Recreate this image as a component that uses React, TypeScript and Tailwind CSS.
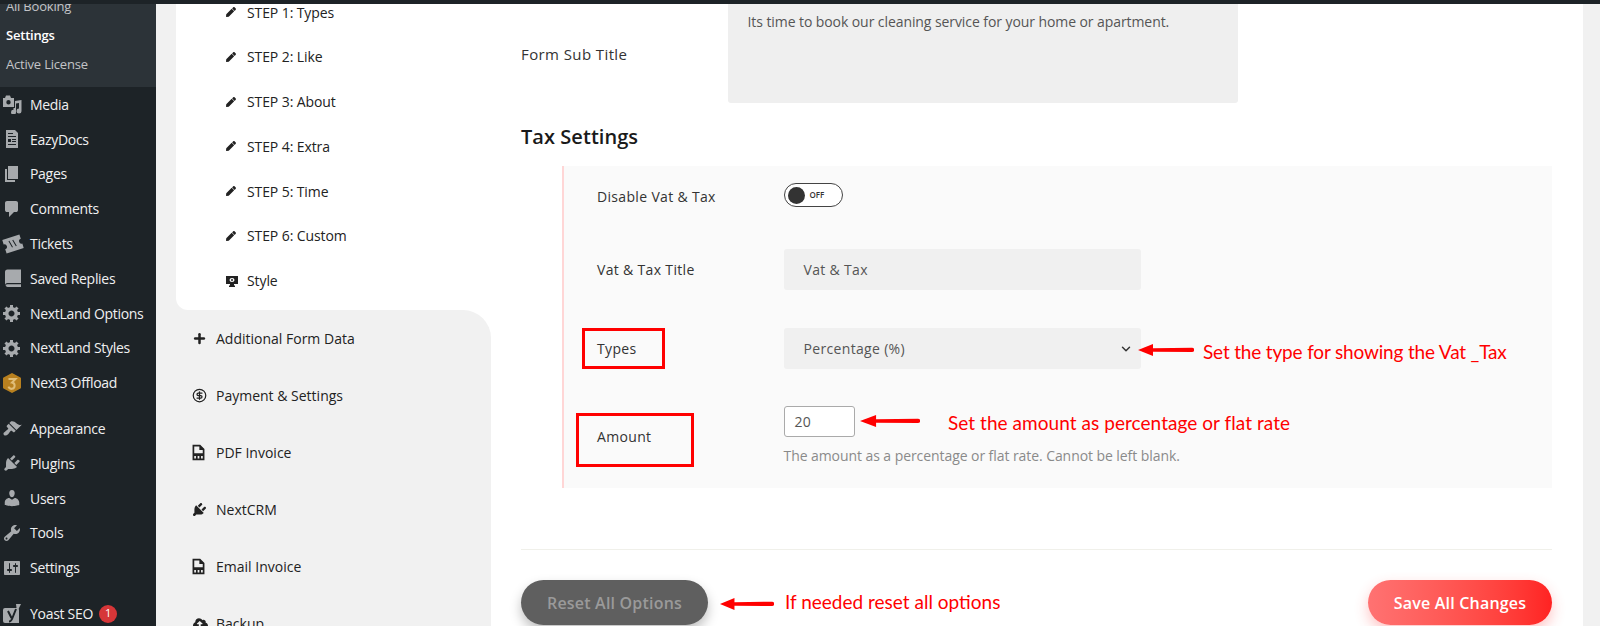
import { ChevronDown, CircleDollarSign, Plus } from 'lucide-react';
import { FaCloudUploadAlt, FaPen } from 'react-icons/fa';
import type { ReactNode } from 'react';

function Dash({ d, className = 'w-5 h-5' }: { d: string; className?: string }) {
  return (
    <svg viewBox="0 0 20 20" fill="currentColor" fillRule="evenodd" className={className}>
      <path d={d} />
    </svg>
  );
}

const gear =
  'M18 12h-2.18c-.17.7-.44 1.35-.81 1.93l1.54 1.54-2.1 2.1-1.54-1.54c-.58.36-1.23.63-1.91.79V19H8v-2.18c-.68-.16-1.33-.43-1.91-.79l-1.54 1.54-2.12-2.12 1.54-1.54c-.36-.58-.63-1.23-.79-1.91H1V9.03h2.17c.16-.7.44-1.35.8-1.94L2.43 5.55l2.1-2.1 1.54 1.54c.58-.37 1.24-.64 1.93-.81V2h3v2.18c.68.16 1.33.43 1.91.79l1.54-1.54 2.12 2.12-1.54 1.54c.36.59.64 1.24.8 1.94H18V12zm-8.5 1.5c1.66 0 3-1.34 3-3s-1.34-3-3-3-3 1.34-3 3 1.34 3 3 3z';
const plug =
  'M13.11 4.36L9.87 7.6 8 5.73l3.24-3.24c.35-.34 1.05-.2 1.56.32.52.51.66 1.21.31 1.55zm-8 1.77l.91-1.12 9.01 9.01-1.19.84c-.71.71-2.63 1.16-3.82 1.16H6.14L4.9 17.26c-.59.59-1.54.59-2.12 0-.59-.58-.59-1.53 0-2.12l1.24-1.24v-3.88c0-1.13.4-3.19 1.09-3.89zm7.26 3.97l3.24-3.24c.34-.35 1.04-.21 1.55.31.52.51.66 1.21.31 1.55l-3.24 3.25z';
const fileBars =
  'M3 1h9l5 5v13H3zM11 3H5v8h10V7h-4zM5 14v3h2v-3zm4 0v3h2v-3zm4 0v3h2v-3z';

function MediaIcon() {
  return (
    <svg viewBox="0 0 20 20" fill="currentColor" fillRule="evenodd" className="w-5 h-5">
      <path d="M1 4h2l1-2.500h4L9 4h3v9H1zM6.500 6a2.200 2.200 0 1 0 0 4.400 2.200 2.200 0 0 0 0-4.400z" />
      <path d="M19.500 6v11a2.500 2.500 0 1 1-2.500-2.400V9l-3 .6V18a2.500 2.500 0 1 1-2.500-2.300V14H13V7z" />
    </svg>
  );
}

function DocIcon() {
  return (
    <svg viewBox="0 0 20 20" className="w-5 h-5">
      <path fill="currentColor" d="M4 1h9l3 3v15H4z" />
      <path fill="#1d2327" d="M6 4h5v1H6zM6 7h8v1H6zM6 10h3v3H6zM10 10h4v1h-4zM10 12h4v1h-4zM6 15h8v1H6z" />
    </svg>
  );
}

function TicketIcon() {
  return (
    <svg viewBox="0 0 22 20" className="w-[22px] h-5">
      <g transform="rotate(-18 11 10)">
        <path fill="currentColor" d="M2 3h18v4.500a2.500 2.500 0 0 0 0 5V17H2v-4.500a2.500 2.500 0 0 0 0-5z" />
        <path stroke="#1d2327" strokeWidth="1" d="M8 6l1.500 7M12 6l1.500 7" />
      </g>
    </svg>
  );
}

function BookIcon() {
  return (
    <svg viewBox="0 0 20 20" fill="currentColor" className="w-5 h-5">
      <path d="M3 4a2.500 2.500 0 0 1 2.500-2.500H19v13.500H5.500A2.500 2.500 0 0 0 3 17z" />
      <path d="M5.500 16.200H19V19H5.500A2 2 0 0 1 3.600 17.600a2 2 0 0 1 1.900-1.400z" />
    </svg>
  );
}

function HexIcon() {
  return (
    <svg viewBox="0 0 20 22" className="w-5 h-[22px]">
      <path fill="#b8801f" d="M10 1l8.500 4.500a1 1 0 0 1 .5 1v9a1 1 0 0 1-.5 1L10 21l-8.500-4.500a1 1 0 0 1-.5-1v-9a1 1 0 0 1 .5-1z" />
      <path fill="none" stroke="#e0bd78" strokeWidth="2" d="M6.500 7h7l-3.500 3.500a3.200 3.200 0 1 1-3.600 4.200" />
    </svg>
  );
}

function YoastIcon() {
  return (
    <svg viewBox="0 0 20 20" className="w-5 h-5">
      <path fill="currentColor" d="M3 4h12a2 2 0 0 1 2 2v13H3a2 2 0 0 1-2-2V6a2 2 0 0 1 2-2z" />
      <path fill="currentColor" d="M14 0h5l-4 8z" />
      <path fill="none" stroke="#1d2327" strokeWidth="2" d="M6 7l3.500 7M14 5l-4 10q-1 2.500-3 2.500" />
    </svg>
  );
}

function StyleIcon() {
  return (
    <svg viewBox="0 0 12 12" className="w-3 h-3">
      <path fill="#222" fillRule="evenodd" d="M0 1h12v8H8v1.500h1V12H3v-1.500h1V9H0zM6 3a2.500 2 0 1 0 0 4 2.500 2 0 0 0 0-4z" />
      <circle cx="6" cy="5" r="1" fill="#222" />
    </svg>
  );
}

function Arrow({ className }: { className: string }) {
  return (
    <svg viewBox="0 0 56 14" fill="#ff0000" className={className} preserveAspectRatio="none">
      <path d="M0 7L15 1v4.200L54 4.700a2 2 0 0 1 0 4.400L15 8.800V13z" />
    </svg>
  );
}

const topMenu: [string, ReactNode][] = [
  ['Media', <MediaIcon />],
  ['EazyDocs', <DocIcon />],
  ['Pages', <Dash d="M6 15V2h10v13H6zm-1 1h8v2H3V5h2v11z" />],
  ['Comments', <Dash d="M5 2h9q.82 0 1.410.59T16 4v7q0 .82-.59 1.410T14 13h-2l-5 5v-5H5q-.82 0-1.410-.59T3 11V4q0-.82.59-1.410T5 2z" />],
  ['Tickets', <TicketIcon />],
  ['Saved Replies', <BookIcon />],
  ['NextLand Options', <Dash d={gear} />],
  ['NextLand Styles', <Dash d={gear} />],
  ['Next3 Offload', <HexIcon />],
];

const lowerMenu: [string, ReactNode][] = [
  ['Appearance', <Dash d="M14.48 11.06L7.41 3.99l1.5-1.5c.5-.56 2.3-.47 3.51.32 1.21.8 1.43 1.28 2.91 2.1 1.18.64 2.45 1.26 4.45.85zm-.71.71L6.7 4.7 4.93 6.47c-.39.39-.39 1.02 0 1.41l1.06 1.06c.39.39.39 1.03 0 1.42-.6.6-1.43 1.11-2.21 1.69-.35.26-.7.53-1.01.84C1.43 13.23 1 15 1.99 16s2.75.56 4.09-.78c.31-.31.58-.65.84-1 .58-.78 1.09-1.61 1.69-2.21.39-.39 1.03-.39 1.42 0l1.06 1.06c.39.39 1.02.39 1.41 0z" />],
  ['Plugins', <Dash d={plug} />],
  ['Users', <Dash d="M10 9.25c-2.27 0-2.73-3.44-2.73-3.44C7 4.02 7.82 2 9.97 2c2.16 0 2.98 2.02 2.71 3.81 0 0-.41 3.44-2.68 3.44zm0 2.57L12.72 10c2.39 0 4.52 2.33 4.52 4.53v2.49s-3.65 1.13-7.24 1.13c-3.65 0-7.24-1.13-7.24-1.13v-2.49c0-2.25 1.94-4.48 4.47-4.48z" />],
  ['Tools', <Dash d="M16.68 9.77c-1.34 1.34-3.3 1.67-4.95.99l-5.41 6.52c-.99.99-2.59.99-3.58 0s-.99-2.59 0-3.57l6.52-5.42c-.68-1.65-.35-3.61.99-4.95 1.28-1.28 3.12-1.62 4.72-1.06l-2.89 2.89 2.82 2.82 2.86-2.87c.53 1.58.18 3.39-1.08 4.65zM3.81 16.21c.4.39 1.04.39 1.43 0 .4-.4.4-1.04 0-1.43-.39-.4-1.03-.4-1.43 0-.39.39-.39 1.03 0 1.43z" />],
  ['Settings', <Dash d="M18 16V4c0-.55-.45-1-1-1H3c-.55 0-1 .45-1 1v12c0 .55.45 1 1 1h14c.55 0 1-.45 1-1zM8 11h1c.55 0 1 .45 1 1s-.45 1-1 1H8v1.500c0 .28-.22.5-.5.5s-.5-.22-.5-.5V13H6c-.55 0-1-.45-1-1s.45-1 1-1h1V5.500c0-.28.22-.5.5-.5s.5.22.5.5V11zm5-2h-1c-.55 0-1-.45-1-1s.45-1 1-1h1V5.500c0-.28.22-.5.5-.5s.5.22.5.5V7h1c.55 0 1 .45 1 1s-.45 1-1 1h-1v5.500c0 .28-.22.5-.5.5s-.5-.22-.5-.5V9z" />],
];

function MenuRow({ label, icon }: { label: string; icon: ReactNode }) {
  return (
    <div className="h-[34.8px] flex items-center text-[14px] tracking-[-0.3px] text-[#f0f0f1] whitespace-nowrap">
      <span className="w-[30px] pl-[2px] shrink-0 text-[#a7aaad]">{icon}</span>
      {label}
    </div>
  );
}

function Sidebar() {
  return (
    <aside className="w-[156px] shrink-0 bg-[#1d2327] overflow-hidden">
      <div className="h-[83px] bg-[#2c3338] pl-[6px] text-[13px] tracking-[-0.2px] overflow-hidden">
        <div className="h-[29px] -mt-[11.5px] flex items-center text-[#c3c4c7]">All Booking</div>
        <div className="h-[29px] flex items-center font-semibold text-white">Settings</div>
        <div className="h-[29px] flex items-center text-[#c3c4c7]">Active License</div>
      </div>
      {topMenu.map(([label, icon]) => (
        <MenuRow key={label} label={label} icon={icon} />
      ))}
      <div className="h-[11px]" />
      {lowerMenu.map(([label, icon]) => (
        <MenuRow key={label} label={label} icon={icon} />
      ))}
      <div className="h-[11px]" />
      <div className="h-[34.8px] flex items-center text-[14px] tracking-[-0.3px] text-[#f0f0f1]">
        <span className="w-[30px] pl-[2px] shrink-0 text-[#a7aaad]">
          <YoastIcon />
        </span>
        Yoast SEO
        <span className="ml-[6px] w-[18px] h-[18px] rounded-full bg-[#d63638] text-white text-[11px] flex items-center justify-center">
          1
        </span>
      </div>
    </aside>
  );
}

const steps = ['STEP 1: Types', 'STEP 2: Like', 'STEP 3: About', 'STEP 4: Extra', 'STEP 5: Time', 'STEP 6: Custom'];

const sections: [string, ReactNode][] = [
  ['Additional Form Data', <Plus className="w-[15px] h-[15px] -ml-[1px]" strokeWidth={4} />],
  ['Payment & Settings', <CircleDollarSign className="w-[15px] h-[15px] -ml-[1px]" strokeWidth={2} />],
  ['PDF Invoice', <Dash d={fileBars} className="w-[17px] h-[17px] -ml-[3px]" />],
  ['NextCRM', <Dash d={plug} className="w-[17px] h-[17px] -ml-[2px]" />],
  ['Email Invoice', <Dash d={fileBars} className="w-[17px] h-[17px] -ml-[3px]" />],
  ['Backup', <FaCloudUploadAlt className="w-[15px] h-[15px]" />],
];

function SettingsNav() {
  return (
    <div className="w-[335px] shrink-0 flex flex-col text-[14px] text-[#222]">
      <div className="h-[306px] shrink-0 pl-5 bg-[#f1f1f1]">
        <div className="h-full bg-white rounded-bl-[12px] pl-[50px] overflow-hidden">
          <div className="-mt-[14.4px] tracking-[-0.1px]">
            {steps.map((step) => (
              <div key={step} className="h-[44.8px] flex items-center whitespace-nowrap">
                <FaPen className="w-[10px] h-[10px] mr-[11px]" />
                {step}
              </div>
            ))}
            <div className="h-[44.8px] flex items-center">
              <span className="w-[21px]">
                <StyleIcon />
              </span>
              Style
            </div>
          </div>
        </div>
      </div>
      <div className="flex-1 bg-white">
        <div className="h-full bg-[#f1f1f1] rounded-tr-[28px] pl-[37px] overflow-hidden">
          {sections.map(([label, icon]) => (
            <div key={label} className="h-[57px] flex items-center whitespace-nowrap">
              <span className="w-[23px] shrink-0 flex">{icon}</span>
              {label}
            </div>
          ))}
        </div>
      </div>
    </div>
  );
}

function TaxPanel() {
  return (
    <div className="ml-[41px] mt-[15px] h-[322px] border-l-2 border-[#ffd6d6] bg-[#fafafa] pl-[33px] pt-[17px] text-[14px] tracking-[0.33px] text-[#333]">
      <div className="flex items-start h-[24px]">
        <label className="w-[186.5px] shrink-0 pt-1 leading-[20px]">Disable Vat &amp; Tax</label>
        <div className="w-[59px] h-[24px] rounded-full border border-[#444] bg-white flex items-center pl-[3px] gap-[5px]">
          <span className="w-[17px] h-[17px] rounded-full bg-[#333]" />
          <span className="text-[8px] font-semibold tracking-normal">OFF</span>
        </div>
      </div>
      <div className="flex items-center mt-[42px]">
        <label className="w-[186.5px] shrink-0">Vat &amp; Tax Title</label>
        <div className="w-[357px] h-[41px] rounded-[3px] bg-[#f0f0f0] pl-5 flex items-center text-[#555]">Vat &amp; Tax</div>
      </div>
      <div className="flex items-center mt-[38px]">
        <label className="w-[186.5px] shrink-0">Types</label>
        <div className="w-[357px] h-[41px] rounded-[3px] bg-[#f0f0f0] pl-5 pr-2 flex items-center justify-between text-[#555]">
          Percentage (%)
          <ChevronDown className="w-[14px] h-[14px] text-[#333]" strokeWidth={2.5} />
        </div>
      </div>
      <div className="flex items-start mt-[37px]">
        <label className="w-[186.5px] shrink-0 pt-[21px] leading-[20px]">Amount</label>
        <div>
          <div className="w-[71px] h-[31px] rounded-[3px] border border-[#aaa] bg-white pl-[10px] flex items-center text-[#555]">20</div>
          <p className="mt-[9px] leading-[20px] tracking-[-0.07px] text-[#8a8a8a] whitespace-nowrap">
            The amount as a percentage or flat rate. Cannot be left blank.
          </p>
        </div>
      </div>
    </div>
  );
}

function Note({ className, children }: { className: string; children: ReactNode }) {
  return <span className={`absolute text-[#ff0000] text-[19px] leading-[24px] whitespace-nowrap font-['Lato',sans-serif] ${className}`}>{children}</span>;
}

function FormPanel() {
  return (
    <div className="relative flex-1 bg-white pl-[30px] pr-[31px]">
      <div className="flex items-center h-[99px]">
        <label className="w-[206.5px] shrink-0 pt-[2px] text-[15px] tracking-[0.4px] text-[#333]">Form Sub Title</label>
        <div className="w-[510px] h-full bg-[#efefef] rounded-b-[3px] pl-5 pt-2 text-[14px] leading-[20px] tracking-[-0.08px] text-[#555]">
          Its time to book our cleaning service for your home or apartment.
        </div>
      </div>
      <h2 className="mt-5 text-[20px] leading-[28px] font-semibold tracking-[0.05px] text-[#1a1a1a]">Tax Settings</h2>
      <TaxPanel />
      <div className="mt-[61px] border-t border-[#f0f0ea]" />
      <div className="mt-[30px] flex justify-between">
        <button className="w-[187px] h-[45px] rounded-full bg-[#5f5f5f] text-[#9a9a9a] text-[16px] font-semibold tracking-[0.2px] shadow-[0_6px_12px_rgba(0,0,0,0.25)]">
          Reset All Options
        </button>
        <button className="w-[184px] h-[45px] rounded-full bg-gradient-to-r from-[#ff7272] to-[#ff2222] text-white text-[16px] font-semibold tracking-[0.2px] shadow-[0_6px_14px_rgba(255,60,60,0.3)]">
          Save All Changes
        </button>
      </div>

      {/* red markup drawn over the form */}
      <div className="absolute left-[91px] top-[324px] w-[83px] h-[41px] border-[3px] border-[#ff0000]" />
      <div className="absolute left-[85px] top-[409px] w-[118px] h-[54px] border-[3px] border-[#ff0000]" />
      <Arrow className="absolute left-[647px] top-[339px] w-[56px] h-[14px]" />
      <Note className="left-[712px] top-[336px] tracking-[-0.17px]">Set the type for showing the Vat _Tax</Note>
      <Arrow className="absolute left-[369px] top-[410px] w-[60px] h-[14px]" />
      <Note className="left-[457px] top-[407px] tracking-[0.05px]">Set the amount as percentage or flat rate</Note>
      <Arrow className="absolute left-[229px] top-[593px] w-[54px] h-[14px]" />
      <Note className="left-[294px] top-[586px]">If needed reset all options</Note>
    </div>
  );
}

export default function App() {
  return (
    <div className="w-[1600px] h-[626px] overflow-hidden flex flex-col bg-[#f1f1f1] font-['Open_Sans',sans-serif]">
      <div className="h-1 shrink-0 bg-[#1d2327]" />
      <div className="flex flex-1 min-h-0">
        <Sidebar />
        <SettingsNav />
        <FormPanel />
        <div className="w-[17px] shrink-0 bg-[#f1f1f1]" />
      </div>
    </div>
  );
}
